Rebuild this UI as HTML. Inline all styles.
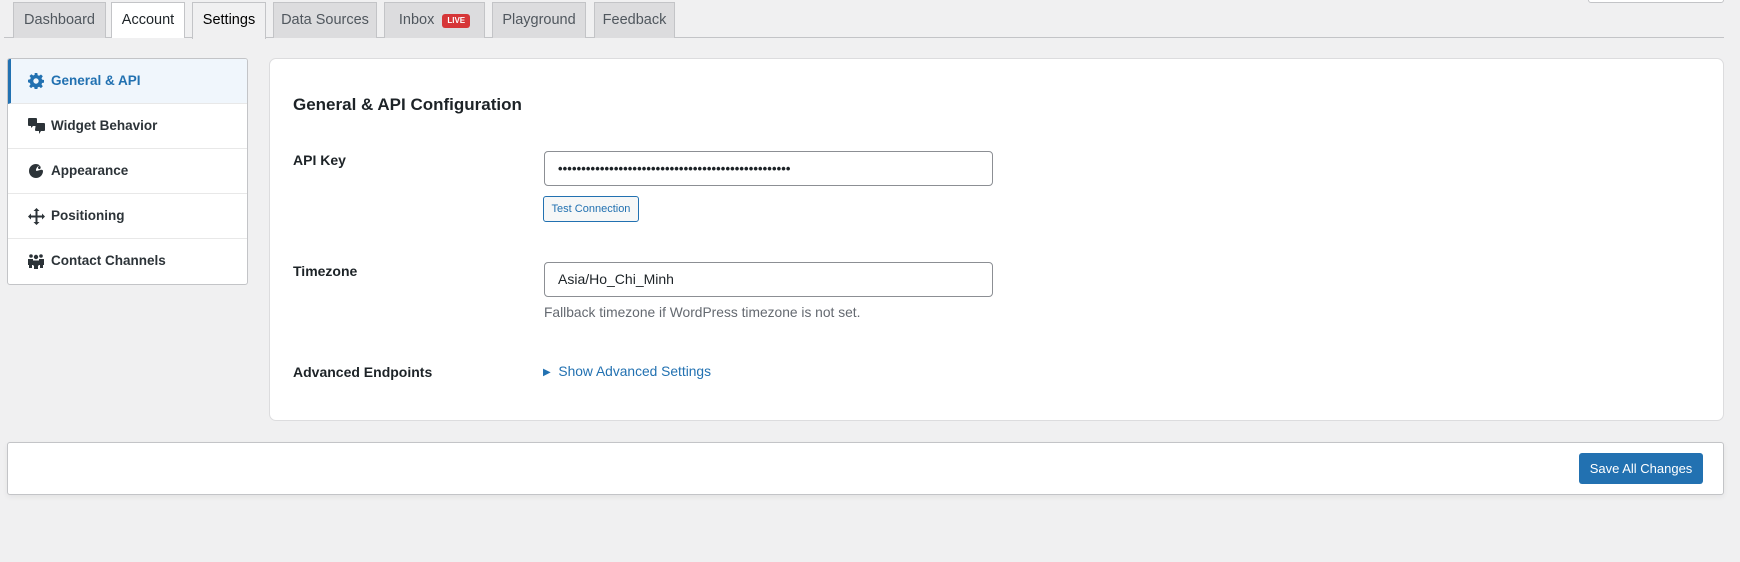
<!DOCTYPE html>
<html><head><meta charset="utf-8"><style>
*{box-sizing:border-box;margin:0;padding:0}
body{width:1740px;height:562px;background:#f0f0f1;font-family:"Liberation Sans",sans-serif;color:#1d2327;position:relative;overflow:hidden;font-size:14px}
.a{position:absolute}
.tab{position:absolute;top:2px;height:36px;border:1px solid #c3c4c7;border-bottom:none;background:#dcdcde;color:#50575e;font-size:14.5px;font-weight:400;line-height:34px;text-align:center}
.tab.w{background:#fff;color:#1d2327}
.tab.s{background:#f0f0f1;color:#000;height:37px}
.live{display:inline-block;background:#d63638;color:#fff;font-size:8px;font-weight:700;line-height:14px;padding:0 5px;border-radius:3px;vertical-align:1px;margin-left:8px}
.side{left:7px;top:58px;width:241px;height:227px;background:#fff;border:1px solid #c3c4c7;border-radius:3px;overflow:hidden}
.it{height:45px;border-bottom:1px solid #e8e8e8;position:relative;line-height:44px;padding-left:43px;font-weight:600;color:#2c3338;font-size:13.5px}
.it svg{position:absolute;left:20px;top:14px}
.it.act{background:#f0f6fc;color:#2271b1;border-left:3px solid #2271b1;padding-left:40px}
.it.act svg{left:17px}
.card{left:269px;top:58px;width:1455px;height:363px;background:#fff;border:1px solid #dcdcde;border-radius:7px}
.lbl{font-weight:600;font-size:14px;color:#1d2327}
.inp{left:544px;width:449px;height:35px;border:1px solid #8c8f94;border-radius:4px;background:#fff;padding-left:13px;line-height:33px;font-size:14px}
</style></head><body>
<div class="a" style="left:4px;top:37px;width:1720px;height:1px;background:#c3c4c7"></div>
<div class="a" style="left:1588px;top:-4px;width:136px;height:7px;background:#fff;border:1px solid #c3c4c7;border-radius:3px"></div>
<div class="tab" style="left:13px;width:93px">Dashboard</div>
<div class="tab w" style="left:111px;width:74px">Account</div>
<div class="tab s" style="left:192px;width:74px">Settings</div>
<div class="tab" style="left:273px;width:104px">Data Sources</div>
<div class="tab" style="left:384px;width:101px">Inbox<span class="live">LIVE</span></div>
<div class="tab" style="left:492px;width:94px">Playground</div>
<div class="tab" style="left:594px;width:81px">Feedback</div>

<div class="a side">
<div class="it act"><svg width="16" height="16" viewBox="0 0 16 16"><path fill="#2271b1" d="M6.7 0h2.6l.4 2.2 1.4.6 1.9-1.3 1.8 1.8-1.3 1.9.6 1.4 2.2.4v2.6l-2.2.4-.6 1.4 1.3 1.9-1.8 1.8-1.9-1.3-1.4.6-.4 2.2H6.7l-.4-2.2-1.4-.6-1.9 1.3-1.8-1.8 1.3-1.9-.6-1.4L0 9.3V6.7l2.2-.4.6-1.4-1.3-1.9 1.8-1.8 1.9 1.3 1.4-.6zM8 5.3a2.7 2.7 0 100 5.4 2.7 2.7 0 000-5.4z"/></svg>General &amp; API</div>
<div class="it"><svg width="17" height="16" viewBox="0 0 17 16"><path fill="#2c3338" d="M1 0h7a1 1 0 011 1v6a1 1 0 01-1 1H5L3 10V8H1a1 1 0 01-1-1V1a1 1 0 011-1zM8 5h8a1 1 0 011 1v6a1 1 0 01-1 1h-3l-2 3v-3H8a1 1 0 01-1-1z"/></svg>Widget Behavior</div>
<div class="it"><svg width="16" height="16" viewBox="0 0 16 16"><path fill="#2c3338" d="M8 1a7 7 0 107 7c0-1-1-1.5-2-1.2L8.5 8C7 7 9 3 12 2.5A7 7 0 008 1zm4 2a2 2 0 00-2 2 1.5 1.5 0 002 1 2 2 0 000-3z"/></svg>Appearance</div>
<div class="it"><svg width="17" height="17" viewBox="0 0 17 17"><path fill="#2c3338" d="M8.5 0l3 3h-2v4.5H14v-2l3 3-3 3v-2H9.5V14h2l-3 3-3-3h2V9.5H3v2l-3-3 3-3v2h4.5V3h-2z"/></svg>Positioning</div>
<div class="it" style="border-bottom:none"><svg width="16" height="16" viewBox="0 0 16 16"><g fill="#2c3338"><circle cx="3" cy="3" r="1.8"/><circle cx="13" cy="3" r="1.8"/><circle cx="8" cy="4" r="2.2"/><path d="M0 6h5v6H4v3H1v-3H0zM11 6h5v6h-1v3h-3v-3h-1zM5 7.5h6v5H10V16H6v-3.5H5z"/></g></svg>Contact Channels</div>
</div>

<div class="a card"></div>
<div class="a" style="left:293px;top:95px;font-size:17px;font-weight:600;color:#1d2327">General &amp; API Configuration</div>
<div class="a lbl" style="left:293px;top:152px">API Key</div>
<div class="a inp" style="top:151px;font-size:13px;letter-spacing:0.1px;font-weight:700">••••••••••••••••••••••••••••••••••••••••••••••••••</div>
<div class="a" style="left:543px;top:196px;width:96px;height:26px;border:1px solid #2271b1;border-radius:3px;background:#f6f7f7;color:#2271b1;font-size:11px;line-height:24px;text-align:center">Test Connection</div>
<div class="a lbl" style="left:293px;top:263px">Timezone</div>
<div class="a inp" style="top:262px">Asia/Ho_Chi_Minh</div>
<div class="a" style="left:544px;top:305px;color:#646970;font-size:13.8px">Fallback timezone if WordPress timezone is not set.</div>
<div class="a lbl" style="left:293px;top:364px">Advanced Endpoints</div>
<div class="a" style="left:543px;top:364px;color:#2271b1;font-size:13.8px"><span style="font-size:10px;vertical-align:1px">▶</span>&nbsp; Show Advanced Settings</div>

<div class="a" style="left:7px;top:442px;width:1717px;height:53px;background:#fff;border:1px solid #c3c4c7;border-radius:3px;box-shadow:0 2px 6px rgba(0,0,0,.06)"></div>
<div class="a" style="left:1579px;top:453px;width:124px;height:31px;background:#2271b1;border-radius:3px;color:#fff;font-size:13px;line-height:31px;text-align:center">Save All Changes</div>
</body></html>
